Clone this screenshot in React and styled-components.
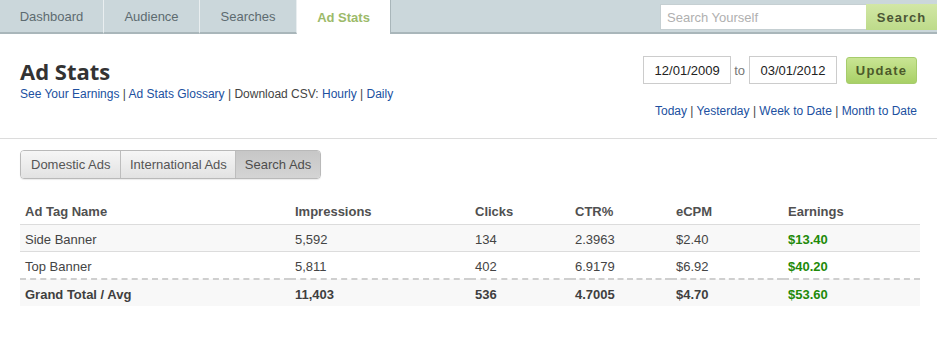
import React from "react";
import styled, { createGlobalStyle, css } from "styled-components";

const GlobalStyle = createGlobalStyle`
  body {
    margin: 0;
    background: #fff;
    font-family: "Liberation Sans", Arial, sans-serif;
  }
`;

const NavBar = styled.div`
  display: flex;
  align-items: stretch;
  height: 34px;
`;

const Tab = styled.div`
  width: ${(p) => p.w}px;
  box-sizing: border-box;
  display: flex;
  align-items: center;
  justify-content: center;
  font-size: 13px;
  color: #5d6b70;
  background: #cbd7db;
  border-right: 1px solid #e9eef0;
  border-bottom: 2px solid #a9b6ba;
  ${(p) =>
    p.active &&
    css`
      background: #fff;
      color: #9cba6a;
      font-weight: bold;
      border-bottom: none;
      border-right: 1px solid #a9b6ba;
    `}
`;

const NavRest = styled.div`
  flex: 1;
  display: flex;
  justify-content: flex-end;
  align-items: flex-start;
  padding-top: 4px;
  background: #cbd7db;
  border-bottom: 2px solid #a9b6ba;
`;

const SearchInput = styled.div`
  width: 206px;
  height: 26px;
  box-sizing: border-box;
  background: #fff;
  border: 1px solid #c5cfd2;
  border-right: none;
  font-size: 13px;
  color: #b0b0b0;
  padding: 5px 6px;
`;

const SearchButton = styled.div`
  width: 71px;
  height: 26px;
  box-sizing: border-box;
  background: linear-gradient(#d2e7a6, #bddb8a);
  font-size: 13px;
  font-weight: bold;
  letter-spacing: 1px;
  color: #4b5636;
  display: flex;
  align-items: center;
  justify-content: center;
`;

const Top = styled.div`
  display: flex;
  justify-content: space-between;
  padding: 24px 20px 0;
  height: 80px;
  border-bottom: 1px solid #dcdcdc;
`;

const Title = styled.h1`
  margin: 0;
  font-family: "Open Sans", sans-serif;
  font-weight: 700;
  font-size: 22px;
  line-height: 26px;
  color: #333;
`;

const Links = styled.div`
  font-size: 12px;
  color: #444;
  margin-top: 3px;
`;

const A = styled.span`
  color: #2050a0;
`;

const Right = styled.div`
  display: flex;
  flex-direction: column;
  align-items: flex-end;
`;

const DateRow = styled.div`
  display: flex;
  align-items: center;
  font-size: 13px;
  color: #777;
  margin-top: -2px;
`;

const DateBox = styled.div`
  width: 88px;
  height: 28px;
  box-sizing: border-box;
  border: 1px solid #ccc;
  font-size: 13px;
  color: #222;
  display: flex;
  align-items: center;
  justify-content: center;
`;

const To = styled.span`
  margin: 0 4px 0 3px;
`;

const UpdateButton = styled.div`
  margin-left: 9px;
  width: 71px;
  height: 27px;
  box-sizing: border-box;
  border: 1px solid #a6cc6c;
  border-radius: 3px;
  background: linear-gradient(#c9e594, #a8d066);
  font-size: 13px;
  font-weight: bold;
  letter-spacing: 1.2px;
  color: #4b5a2a;
  display: flex;
  align-items: center;
  justify-content: center;
`;

const QuickLinks = styled.div`
  margin-top: 20px;
  font-size: 12px;
  color: #444;
`;

const Body = styled.div`
  padding: 11px 17px 0 20px;
`;

const Group = styled.div`
  display: inline-flex;
  border: 1px solid #b9b9b9;
  border-radius: 4px;
  overflow: hidden;
  box-shadow: 0 1px 1px rgba(0, 0, 0, 0.08);
`;

const GroupBtn = styled.div`
  height: 27px;
  padding: 0 ${(p) => p.px}px;
  display: flex;
  align-items: center;
  font-size: 13px;
  color: #555;
  background: linear-gradient(#f6f6f6, #e2e2e2);
  border-left: 1px solid #bdbdbd;
  &:first-child {
    border-left: none;
  }
  ${(p) =>
    p.active &&
    css`
      background: linear-gradient(#c7c7c7, #d4d4d4);
      color: #4d4d4d;
    `}
`;

const Table = styled.table`
  margin-top: 20px;
  width: 900px;
  border-collapse: collapse;
  font-size: 13px;
  color: #444;
`;

const Th = styled.th`
  text-align: left;
  font-weight: bold;
  color: #505050;
  padding: 4px 5px 5px;
  height: 16px;
  border-bottom: 1px solid #dcdcdc;
`;

const Tr = styled.tr`
  background: ${(p) => (p.shade ? "#f8f8f8" : "#fff")};
  ${(p) =>
    p.total &&
    css`
      border-top: 2px dashed #cfcfcf;
      font-weight: bold;
      color: #3f3f3f;
    `}
  ${(p) => !p.total && css`border-bottom: 1px solid #dcdcdc;`}
`;

const Td = styled.td`
  padding: 2px 5px 0;
  height: 24px;
  ${(p) => p.money && css`color: #1f8a0a; font-weight: bold;`}
`;

const cols = [270, 180, 100, 101, 112, 137];

const rows = [
  ["Side Banner", "5,592", "134", "2.3963", "$2.40", "$13.40"],
  ["Top Banner", "5,811", "402", "6.9179", "$6.92", "$40.20"],
];

export default function App() {
  return (
    <>
      <GlobalStyle />
      <NavBar>
        <Tab w={104}>Dashboard</Tab>
        <Tab w={96}>Audience</Tab>
        <Tab w={97}>Searches</Tab>
        <Tab w={94} active>
          Ad Stats
        </Tab>
        <NavRest>
          <SearchInput>Search Yourself</SearchInput>
          <SearchButton>Search</SearchButton>
        </NavRest>
      </NavBar>
      <Top>
        <div>
          <Title>Ad Stats</Title>
          <Links>
            <A>See Your Earnings</A> | <A>Ad Stats Glossary</A> | Download CSV:{" "}
            <A>Hourly</A> | <A>Daily</A>
          </Links>
        </div>
        <Right>
          <DateRow>
            <DateBox>12/01/2009</DateBox>
            <To>to</To>
            <DateBox>03/01/2012</DateBox>
            <UpdateButton>Update</UpdateButton>
          </DateRow>
          <QuickLinks>
            <A>Today</A> | <A>Yesterday</A> | <A>Week to Date</A> |{" "}
            <A>Month to Date</A>
          </QuickLinks>
        </Right>
      </Top>
      <Body>
        <Group>
          <GroupBtn px={10}>Domestic Ads</GroupBtn>
          <GroupBtn px={8.5}>International Ads</GroupBtn>
          <GroupBtn px={8.5} active>
            Search Ads
          </GroupBtn>
        </Group>
        <Table>
          <colgroup>
            {cols.map((w, i) => (
              <col key={i} style={{ width: w }} />
            ))}
          </colgroup>
          <thead>
            <tr>
              <Th>Ad Tag Name</Th>
              <Th>Impressions</Th>
              <Th>Clicks</Th>
              <Th>CTR%</Th>
              <Th>eCPM</Th>
              <Th>Earnings</Th>
            </tr>
          </thead>
          <tbody>
            {rows.map((r, i) => (
              <Tr key={r[0]} shade={i % 2 === 0}>
                {r.map((c, j) => (
                  <Td key={j} money={j === 5}>
                    {c}
                  </Td>
                ))}
              </Tr>
            ))}
            <Tr total shade>
              <Td>Grand Total / Avg</Td>
              <Td>11,403</Td>
              <Td>536</Td>
              <Td>4.7005</Td>
              <Td>$4.70</Td>
              <Td money>$53.60</Td>
            </Tr>
          </tbody>
        </Table>
      </Body>
    </>
  );
}
